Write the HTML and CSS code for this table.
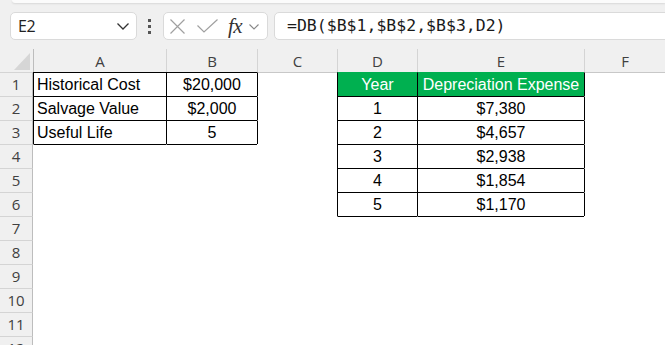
FILE: index.html
```html
<!DOCTYPE html>
<html>
<head>
<meta charset="utf-8">
<link rel="stylesheet" href="styles.css">
</head>
<body>
<div class="app">
  <div class="ribbon-edge"></div>
  <div class="fbar">
    <div class="namebox">
      <span class="nb-text">E2</span>
      <svg class="nb-chev" width="12" height="7" viewBox="0 0 12 7"><polyline points="0.5,0.5 6,6 11.5,0.5" fill="none" stroke="#333" stroke-width="1.3"/></svg>
    </div>
    <div class="dots"><i></i><i></i><i></i></div>
    <div class="fxbox">
      <svg class="ic-x" width="15" height="15" viewBox="0 0 15 15"><path d="M0.5 0.5 L14.5 14.5 M14.5 0.5 L0.5 14.5" stroke="#a0a0a0" stroke-width="1.2" fill="none"/></svg>
      <svg class="ic-check" width="21" height="14" viewBox="0 0 21 14"><polyline points="0.5,6.5 7,13 20.5,0.5" fill="none" stroke="#a0a0a0" stroke-width="1.2"/></svg>
      <span class="fx">fx</span>
      <svg class="ic-chev" width="10" height="6" viewBox="0 0 10 6"><polyline points="0.5,0.5 5,5 9.5,0.5" fill="none" stroke="#888" stroke-width="1.1"/></svg>
    </div>
    <div class="formula">=DB($B$1,$B$2,$B$3,D2)</div>
  </div>
  <div class="sheet">
    <div class="corner"><div class="tri"></div></div>
    <div class="ch">A</div><div class="ch">B</div><div class="ch">C</div><div class="ch">D</div><div class="ch">E</div><div class="ch">F</div>

    <div class="rh">1</div>
    <div class="c r1 bl bt txt">Historical Cost</div><div class="c r1 bl bt num">$20,000</div><div class="c r1 bl"></div>
    <div class="c r1 bl gt hdr">Year</div><div class="c r1 bl gt hdr">Depreciation Expense</div><div class="c r1 bl"></div>

    <div class="rh">2</div>
    <div class="c bl bt txt">Salvage Value</div><div class="c bl bt num">$2,000</div><div class="c bl"></div>
    <div class="c bl bt num">1</div><div class="c bl bt num">$7,380</div><div class="c bl"></div>

    <div class="rh">3</div>
    <div class="c bl bt txt">Useful Life</div><div class="c bl bt num">5</div><div class="c bl"></div>
    <div class="c bl bt num">2</div><div class="c bl bt num">$4,657</div><div class="c bl"></div>

    <div class="rh">4</div>
    <div class="c bt"></div><div class="c bt"></div><div class="c"></div>
    <div class="c bl bt num">3</div><div class="c bl bt num">$2,938</div><div class="c bl"></div>

    <div class="rh">5</div>
    <div class="c"></div><div class="c"></div><div class="c"></div>
    <div class="c bl bt num">4</div><div class="c bl bt num">$1,854</div><div class="c bl"></div>

    <div class="rh">6</div>
    <div class="c"></div><div class="c"></div><div class="c"></div>
    <div class="c bl bt num">5</div><div class="c bl bt num">$1,170</div><div class="c bl"></div>

    <div class="rh">7</div>
    <div class="c"></div><div class="c"></div><div class="c"></div>
    <div class="c bt"></div><div class="c bt"></div><div class="c"></div>

    <div class="rh">8</div>
    <div class="c"></div><div class="c"></div><div class="c"></div><div class="c"></div><div class="c"></div><div class="c"></div>
    <div class="rh">9</div>
    <div class="c"></div><div class="c"></div><div class="c"></div><div class="c"></div><div class="c"></div><div class="c"></div>
    <div class="rh">10</div>
    <div class="c"></div><div class="c"></div><div class="c"></div><div class="c"></div><div class="c"></div><div class="c"></div>
    <div class="rh">11</div>
    <div class="c"></div><div class="c"></div><div class="c"></div><div class="c"></div><div class="c"></div><div class="c"></div>
    <div class="rh">12</div>
    <div class="c"></div><div class="c"></div><div class="c"></div><div class="c"></div><div class="c"></div><div class="c"></div>
  </div>
</div>
</body>
</html>
```

FILE: styles.css
```css
* { box-sizing: border-box; }
html, body { margin: 0; padding: 0; }
body {
  background: #f0f0f0;
  width: 665px;
  height: 345px;
  overflow: hidden;
  font-family: "Open Sans", "Noto Sans", sans-serif;
}
.app { width: 665px; }

.ribbon-edge {
  height: 3px;
  margin-left: 12px;
  background: #fbfbfb;
  border-bottom-left-radius: 4px;
  box-shadow: 0 1px 2px rgba(0,0,0,0.10);
}

.fbar {
  display: flex;
  align-items: flex-start;
  height: 46px;
  padding-top: 9px;
}
.namebox {
  margin-left: 10px;
  width: 127px;
  height: 28px;
  background: #fff;
  border: 1px solid #dadada;
  border-radius: 5px;
  display: flex;
  align-items: center;
  justify-content: space-between;
  padding: 0 7px 0 7px;
}
.nb-text {
  font-size: 16px;
  color: #222;
  letter-spacing: -0.4px;
}
.nb-chev { margin-top: 1px; }

.dots {
  margin-left: 11px;
  width: 4px;
  height: 28px;
  display: flex;
  flex-direction: column;
  justify-content: center;
  gap: 3px;
}
.dots i {
  display: block;
  width: 3px;
  height: 3px;
  background: #555;
}

.fxbox {
  margin-left: 11px;
  width: 105px;
  height: 28px;
  background: #fff;
  border: 1px solid #dadada;
  border-radius: 5px;
  display: flex;
  align-items: center;
  padding-left: 6px;
}
.ic-x { margin-top: 1px; }
.ic-check { margin-left: 12px; margin-top: 0px; }
.fx {
  margin-left: 10px;
  font-family: "Liberation Serif", "DejaVu Serif", serif;
  font-style: italic;
  font-size: 21px;
  color: #333;
  line-height: 1;
  letter-spacing: -0.5px;
}
.ic-chev { margin-left: 7px; margin-top: 2px; }

.formula {
  margin-left: 6px;
  flex: 1;
  margin-right: -10px;
  height: 28px;
  background: #fff;
  border: 1px solid #dadada;
  border-radius: 5px;
  padding-left: 12px;
  font-family: "DejaVu Sans Mono", "Liberation Mono", monospace;
  font-size: 16.5px;
  line-height: 26px;
  color: #1a1a1a;
  white-space: nowrap;
}

.sheet {
  display: grid;
  grid-template-columns: 33px 133px 91px 80px 80px 167px 81px;
  grid-template-rows: 23px;
  grid-auto-rows: 24px;
}
.corner {
  display: flex;
  align-items: flex-end;
  justify-content: flex-end;
  padding: 0 3px 2px 0;
}
.tri {
  width: 16px;
  height: 17px;
  background: #d6d6d6;
  clip-path: polygon(100% 0, 100% 100%, 0 100%);
}
.ch {
  border-left: 1px solid #d4d4d4;
  text-align: center;
  font-size: 15px;
  line-height: 24px;
  color: #404040;
}
.ch:nth-child(2) { border-left-color: #bdbdbd; }

.rh {
  background: #f0f0f0;
  border-top: 1px solid #d4d4d4;
  border-right: 1px solid #bdbdbd;
  text-align: center;
  font-size: 15px;
  line-height: 23px;
  color: #404040;
  padding-left: 0;
}

.c {
  background: #fff;
  border-left: 1px solid transparent;
  border-top: 1px solid transparent;
  background-clip: border-box;
  font-family: "Liberation Sans", Arial, sans-serif;
  font-size: 16px;
  line-height: 24px;
  color: #000;
  white-space: nowrap;
}
.r1 { border-top-color: #c8c8c8; }
.bt { border-top-color: #000; }
.bl { border-left-color: #000; }
.gt { border-top-color: #00b050; }
.txt { padding-left: 3px; }
.num { text-align: center; }
.hdr {
  background: #00b050;
  color: #fff;
  text-align: center;
}
```
